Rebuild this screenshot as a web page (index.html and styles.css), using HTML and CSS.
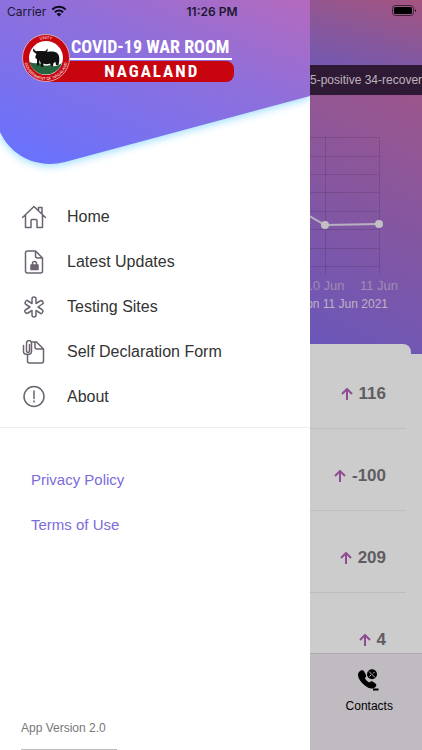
FILE: index.html
```
<!DOCTYPE html>
<html lang="en">
<head>
    <meta charset="UTF-8">
    <meta name="viewport" content="width=device-width, initial-scale=1">
    <title>COVID-19 War Room Nagaland</title>
    <link rel="stylesheet" href="styles.css">
</head>
<body>
    <div class="app">
        <main class="dashboard">
            <div class="topbar"></div>
            <div class="ticker">5-positive 34-recovered</div>

            <section class="chart">
                <svg class="plot" width="86" height="137" viewBox="0 0 86 137">
                    <path class="grid" d="M0 .5H69M0 19.5H69M0 37.5H69M0 55.5H69M0 74.5H69M0 92.5H69M0 111.5H69M0 129.5H69M15.5 0V137M69.5 0V137"/>
                    <path class="trend" d="M-20 68L15 88L69 87"/>
                    <circle class="dot" cx="15" cy="88" r="4"/>
                    <circle class="dot" cx="69" cy="87" r="4"/>
                </svg>
                <div class="days"><span>10 Jun</span><span>11 Jun</span></div>
                <p class="updated">on 11 Jun 2021</p>
            </section>

            <section class="stats">
                <ul>
                    <li><svg class="arrow" width="12" height="12" viewBox="0 0 12 12"><path d="M6 12V1M1 6L6 1L11 6"/></svg><b>116</b></li>
                    <li><svg class="arrow" width="12" height="12" viewBox="0 0 12 12"><path d="M6 12V1M1 6L6 1L11 6"/></svg><b>-100</b></li>
                    <li><svg class="arrow" width="12" height="12" viewBox="0 0 12 12"><path d="M6 12V1M1 6L6 1L11 6"/></svg><b>209</b></li>
                    <li><svg class="arrow" width="12" height="12" viewBox="0 0 12 12"><path d="M6 12V1M1 6L6 1L11 6"/></svg><b>4</b></li>
                </ul>
            </section>

            <nav class="tabs">
                <a href="#contacts">
                    <svg width="22" height="22" viewBox="0 0 22 22">
                        <path d="M1.500 2.500C3 .8 5.500 1 6.300 2.800L8 6C8.500 7.500 7.800 8.300 6.800 9C7.800 11.300 9.500 12.500 11.500 13.500C12.600 12.300 13.800 12 15 12.800L17.500 14.500C18.800 15.500 18.600 17 17.200 18.200C14.500 20.600 10.500 19.600 6.500 16.300C2.500 13 0 9 0 6C0 4.500 .5 3.500 1.500 2.500Z"/>
                        <circle cx="14" cy="5.200" r="5"/>
                        <path class="cut" d="M11 2.500L17 8.500M16.500 3L15 4.500M13 6L11.500 7.500"/>
                        <path class="dash" d="M15 20.500H20.500"/>
                    </svg>
                    <span>Contacts</span>
                </a>
            </nav>
        </main>

        <div class="backdrop"></div>

        <aside class="drawer">
            <svg class="wave" viewBox="0 0 310 180" preserveAspectRatio="none">
                <defs>
                    <linearGradient id="sky" gradientUnits="userSpaceOnUse" x1="310" y1="0" x2="217" y2="232">
                        <stop offset="0" stop-color="#b46abd"/>
                        <stop offset=".4" stop-color="#906fda"/>
                        <stop offset="1" stop-color="#6a72fc"/>
                    </linearGradient>
                </defs>
                <path fill="url(#sky)" d="M0 0H310V96L65 162C37 169 11 156 0 132Z"/>
            </svg>

            <header class="brand">
                <svg class="seal" width="48" height="48" viewBox="0 0 48 48">
                    <defs>
                        <path id="arcTop" d="M5 24A19 19 0 0 1 43 24"/>
                        <path id="arcBottom" d="M2 24A22 22 0 0 0 46 24"/>
                    </defs>
                    <circle cx="24" cy="24" r="23.500" fill="#c8050f" stroke="#d9a5b5"/>
                    <circle cx="24" cy="24" r="17" fill="#fff"/>
                    <path fill="#24643f" d="M7.500 28Q12 30 17 29Q22 33 28 31Q34 34 40 29A17 17 0 0 1 7.500 28Z"/>
                    <path fill="#111" d="M12.500 18.500C10.500 17.500 10.500 15 12 14.500C12 16.500 14 17.500 16 17L20 17C23 17.500 25 16.500 25 14.500C26.500 16 25.500 18.500 23 19C27 17 33 17 35.500 19.500C38 22 37.500 27 36.500 31H34L33.500 28L31.500 29L31 32H29L28 29.500Q24 31 21.500 29.500L21 33H19L18.500 28.500L17.500 26L17 31.500H15L15 25C13 25 13 22 14.500 20Z"/>
                    <text class="ring"><textPath href="#arcTop" startOffset="50%">UNITY</textPath></text>
                    <text class="ring"><textPath href="#arcBottom" startOffset="50%">GOVERNMENT OF NAGALAND</textPath></text>
                </svg>
                <div class="name">
                    <span class="title">COVID-19 WAR ROOM</span>
                    <span class="state">NAGALAND</span>
                </div>
            </header>

            <nav class="menu">
                <a href="#home">
                    <svg viewBox="0 0 48 48"><path d="M1 25L24 3L47 25M7 20V45H18V31Q18 29 20 29H28Q30 29 30 31V45H41V20M33 10V5H40V17"/></svg>
                    Home
                </a>
                <a href="#updates">
                    <svg viewBox="0 0 48 48"><path d="M11 2H27L41 16V42Q41 46 37 46H11Q7 46 7 42V6Q7 2 11 2ZM27 2V12Q27 16 31 16H41"/><path class="solid" d="M18 30H32V39H18Z"/><path d="M21 30V27Q21 23 25 23T29 27V30"/></svg>
                    Latest Updates
                </a>
                <a href="#sites">
                    <svg viewBox="0 0 48 48"><path d="M20 8Q20 4 24 4T28 8V17L36 12Q39 10 41.500 13.500T40 18.500L32 24L40 29Q43 31 41 35T36 36L28 31V40Q28 44 24 44T20 40V31L12 36Q9 38 6.500 34.500T8 29L16 24L8 19Q5 17 7 13T12 12L20 17Z"/></svg>
                    Testing Sites
                </a>
                <a href="#declaration">
                    <svg viewBox="0 0 48 48"><path d="M20 4H29L43 18V42Q43 46 39 46H15Q11 46 11 42V30M26 4V14Q26 18 30 18H43M15 9V21Q15 25 12 25T9 21V7Q9 1 14 1T19 7V23Q19 29 11 29T3 23V11"/></svg>
                    Self Declaration Form
                </a>
                <a href="#about">
                    <svg viewBox="0 0 48 48"><circle cx="24" cy="23" r="20"/><path d="M24 12V27M24 32V34"/></svg>
                    About
                </a>
            </nav>

            <nav class="legal">
                <a href="#privacy">Privacy Policy</a>
                <a href="#terms">Terms of Use</a>
            </nav>

            <footer class="version">App Version 2.0</footer>
        </aside>

        <div class="status">
            <span class="carrier">Carrier
                <svg width="16" height="12" viewBox="0 0 16 12"><path d="M1.300 4.500A9.500 9.500 0 0 1 14.700 4.500M3.900 7.300A5.800 5.800 0 0 1 12.100 7.300"/><path class="solid" d="M8 11.500L5.600 9Q8 7 10.400 9Z"/></svg>
            </span>
            <time>11:26 PM</time>
            <svg class="battery" width="25" height="12" viewBox="0 0 25 12"><rect class="shell" x=".5" y=".5" width="21" height="10" rx="3"/><rect x="2" y="2" width="18" height="7" rx="1.500"/><path d="M23 4Q25 5.500 23 7Z"/></svg>
        </div>
    </div>
</body>
</html>
```
FILE: styles.css
```
:root {
    --drawer: calc(100% - 112px);
}
* {
    box-sizing: border-box;
}
body {
    margin: 0;
    font-family: "Liberation Sans", Arial, sans-serif;
    background: #fff;
}
a {
    text-decoration: none;
}
.app {
    position: relative;
    height: 100vh;
    overflow: hidden;
}

/* dashboard behind the drawer */
.dashboard {
    display: flex;
    flex-direction: column;
    height: 100%;
}
.topbar {
    height: 65px;
    background: linear-gradient(195deg, #cd6a9f, #8d70e1 55%);
}
.ticker {
    padding-left: var(--drawer);
    height: 30px;
    line-height: 30px;
    font-size: 12px;
    white-space: nowrap;
    overflow: hidden;
    color: #e6dfe8;
    background: #3b2144;
}
.chart {
    display: flex;
    flex-direction: column;
    align-items: flex-end;
    height: 259px;
    padding: 42px 26px 0 0;
    background: linear-gradient(25deg, #846dea 32%, #c36caf);
}
.plot {
    display: block;
}
.plot .grid {
    fill: none;
    stroke: #000;
    stroke-opacity: .12;
}
.plot .trend {
    fill: none;
    stroke: #e6dcf0;
    stroke-width: 2;
}
.plot .dot {
    fill: #f4f0f6;
}
.days {
    display: grid;
    grid-template-columns: 54px 54px;
    margin-right: -10px;
    text-align: center;
    font-size: 13px;
    line-height: 24px;
    color: #c4b2dc;
}
.updated {
    margin: 0 8px 0 0;
    font-size: 12px;
    line-height: 12px;
    color: #ecdff4;
}
.stats {
    flex: 1;
    min-height: 0;
    margin: -10px 11px 0 0;
    background: #fff;
    border-radius: 0 8px 0 0;
}
.stats ul {
    list-style: none;
    margin: 0;
    padding: 3px 5px 0 0;
}
.stats li {
    display: flex;
    align-items: center;
    justify-content: flex-end;
    gap: 6px;
    height: 82px;
    padding: 12px 20px 0 0;
    border-bottom: 1px solid #eee;
    font-size: 17px;
    color: #77757a;
}
.arrow path {
    fill: none;
    stroke: #b560b4;
    stroke-width: 2;
}
.tabs {
    position: relative;
    display: grid;
    grid-template-columns: repeat(4, 1fr);
    height: 97px;
    padding-top: 15px;
    background: #f1eaf0;
    border-top: 1px solid #dfd8de;
}
.tabs a {
    grid-column: 4;
    display: flex;
    flex-direction: column;
    align-items: center;
    gap: 8px;
    font-size: 12px;
    color: #000;
}
.tabs .cut, .tabs .dash {
    fill: none;
    stroke: #f1eaf0;
}
.tabs .dash {
    stroke: #000;
    stroke-width: 2;
}
.backdrop {
    position: absolute;
    inset: 0;
    background: rgba(0, 0, 0, .2);
}

/* side menu */
.drawer {
    position: absolute;
    top: 0;
    bottom: 0;
    left: 0;
    width: var(--drawer);
    display: flex;
    flex-direction: column;
    overflow: hidden;
    background: #fff;
}
.wave {
    position: absolute;
    top: 0;
    left: 0;
    width: 100%;
    height: 180px;
    overflow: visible;
    filter: drop-shadow(0 2px 4px #9bdcff);
}
.brand {
    position: relative;
    display: flex;
    height: 194px;
    padding: 34px 0 0 22px;
}
.seal {
    position: relative;
    z-index: 1;
}
.ring {
    fill: #fff;
    font-size: 4px;
    text-anchor: middle;
}
.name {
    display: flex;
    flex-direction: column;
    color: #fff;
    font-family: "Roboto Condensed", "Liberation Sans Narrow", "Liberation Sans", sans-serif;
    font-weight: bold;
    white-space: nowrap;
}
.title {
    height: 26px;
    margin-right: 2px;
    padding: 0 2px 0 1px;
    border-bottom: 2px solid #fff;
    font-size: 18px;
    line-height: 25px;
}
.state {
    margin: 1px 0 0 -20px;
    height: 21px;
    padding-left: 20px;
    border-radius: 0 8px 8px 0;
    font-size: 17px;
    line-height: 21px;
    letter-spacing: 2px;
    text-align: center;
    background: #c8050f;
}
.menu {
    display: flex;
    flex-direction: column;
    padding-bottom: 8px;
    border-bottom: 1px solid #eee;
}
.menu a {
    display: flex;
    align-items: center;
    gap: 21px;
    height: 45px;
    padding-left: 22px;
    font-size: 16px;
    color: #333;
}
.menu svg {
    width: 24px;
    height: 24px;
    fill: none;
    stroke: #6b6370;
    stroke-width: 3;
    stroke-linejoin: round;
    stroke-linecap: round;
}
.menu .solid {
    fill: #6b6370;
}
.legal {
    display: flex;
    flex-direction: column;
    padding: 29px 31px;
}
.legal a {
    font-size: 15px;
    line-height: 45px;
    color: #7b6cdb;
}
.version {
    margin: auto 0 0 21px;
    width: 96px;
    height: 30px;
    border-bottom: 1px solid #bbb;
    font-size: 12px;
    line-height: 16px;
    color: #777;
}

/* phone status bar */
.status {
    position: absolute;
    top: 0;
    left: 0;
    right: 0;
    display: grid;
    grid-template-columns: 1fr auto 1fr;
    align-items: center;
    height: 22px;
    padding: 0 5px 0 7px;
    font-family: Inter, sans-serif;
    font-size: 12px;
    color: #1c1830;
}
.carrier {
    display: flex;
    align-items: center;
    gap: 5px;
}
.carrier path {
    fill: none;
    stroke: #0c0a18;
    stroke-width: 2;
}
.carrier .solid {
    fill: #0c0a18;
    stroke: none;
}
.status time {
    font-weight: 600;
}
.battery {
    justify-self: end;
}
.battery .shell {
    fill: none;
    stroke: #3d2436;
}
```
